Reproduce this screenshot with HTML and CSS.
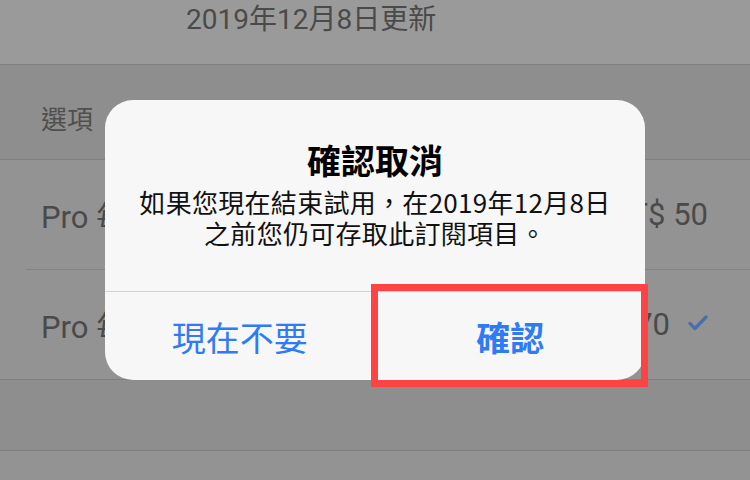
FILE: index.html
```html
<!DOCTYPE html>
<html lang="zh-Hant">
<head>
<meta charset="utf-8">
<link rel="stylesheet" href="styles.css">
</head>
<body>
<div class="screen">
  <div class="info">2019年12月8日更新</div>
  <div class="section-header">選項</div>
  <div class="list">
    <div class="row">
      <span class="row-label">Pro 每月</span>
      <span class="row-value">NT$ 50</span>
    </div>
    <div class="row row-last">
      <span class="row-label">Pro 每年</span>
      <span class="row-value">NT$ 470
        <svg class="check" viewBox="0 0 20 16" width="20" height="16"><path d="M2 8.5 L7 13.5 L18 2" fill="none" stroke="currentColor" stroke-width="3.4" stroke-linecap="round" stroke-linejoin="round"/></svg>
      </span>
    </div>
  </div>
  <div class="footer"></div>
  <div class="rest"></div>

  <div class="alert">
    <div class="alert-body">
      <div class="alert-title">確認取消</div>
      <div class="alert-message">如果您現在結束試用，在2019年12月8日<br>之前您仍可存取此訂閱項目。</div>
    </div>
    <div class="alert-actions">
      <div class="alert-btn">現在不要</div>
      <div class="alert-btn alert-btn-primary">確認</div>
    </div>
  </div>
  <div class="highlight"></div>
</div>
</body>
</html>
```
FILE: styles.css
```css
* { box-sizing: border-box; }
html, body { margin: 0; padding: 0; }
body {
  width: 750px;
  height: 480px;
  overflow: hidden;
  font-family: "Roboto", "Noto Sans CJK TC", sans-serif;
  background: #939393;
}
.screen {
  position: relative;
  width: 750px;
  height: 480px;
  display: flex;
  flex-direction: column;
}
.info {
  height: 65px;
  background: #9a9a9a;
  border-bottom: 1px solid #7f7f7f;
  color: #4a4a4a;
  font-size: 28px;
  line-height: 34px;
  padding: 3px 0 0 186px;
}
.section-header {
  height: 95px;
  background: #8e8e8e;
  border-bottom: 1px solid #7f7f7f;
  color: #4f4f4f;
  font-size: 26px;
  line-height: 30px;
  padding: 40px 0 0 41px;
}
.list {
  background: #939393;
  padding-left: 26px;
  border-bottom: 1px solid #7f7f7f;
}
.row {
  height: 110px;
  display: flex;
  align-items: center;
  justify-content: space-between;
  padding: 0 42px 0 15px;
  border-bottom: 1px solid #838383;
  color: #4a4a4a;
  font-size: 31px;
}
.row-last { border-bottom: none; height: 109px; }
.row-value { display: flex; align-items: center; gap: 18px; }
.check { color: #4a70ab; margin-top: -4px; }
.footer {
  height: 71px;
  background: #8e8e8e;
  border-bottom: 1px solid #7f7f7f;
}
.rest { flex: 1; background: #939393; }

.alert {
  position: absolute;
  left: 105px;
  top: 100px;
  width: 540px;
  height: 280px;
  border-radius: 28px;
  background: #f7f7f7;
  display: flex;
  flex-direction: column;
  overflow: hidden;
  font-family: "Noto Sans CJK TC", sans-serif;
}
.alert-body {
  height: 192px;
  padding-top: 40px;
  text-align: center;
  border-bottom: 1px solid #d4d4d8;
}
.alert-title {
  font-size: 34px;
  font-weight: 700;
  line-height: 40px;
  color: #000;
}
.alert-message {
  margin-top: 6px;
  font-size: 26px;
  line-height: 31px;
  letter-spacing: 0.3px;
  color: #111;
}
.alert-actions {
  flex: 1;
  display: flex;
}
.alert-btn {
  flex: 1;
  display: flex;
  align-items: center;
  justify-content: center;
  color: #2f7bf5;
  font-size: 34px;
}
.alert-btn + .alert-btn { border-left: 1px solid #d4d4d8; }
.alert-btn-primary { font-weight: 700; }

.highlight {
  position: absolute;
  left: 371px;
  top: 284px;
  width: 277px;
  height: 103px;
  border: 7px solid #fc4444;
}
```
